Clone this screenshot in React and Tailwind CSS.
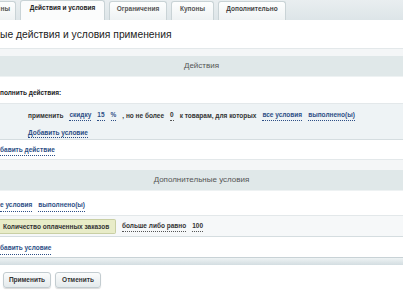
import React from "react";

const L = ({ children, dark }) => (
  <span
    className={
      "border-b border-dotted pb-[1px] whitespace-nowrap " +
      (dark ? "text-[#333] border-[#555]" : "text-[#2d4f86] border-[#2d4f86]")
    }
  >
    {children}
  </span>
);

export default function App() {
  return (
    <div
      className="w-[403px] h-[294px] overflow-hidden bg-white text-[#333]"
      style={{ fontFamily: '"Liberation Sans", Arial, sans-serif' }}
    >
      {/* tabs */}
      <div className="h-[20px] bg-gradient-to-b from-[#e9eef0] to-[#dde5e8] flex items-end gap-[4px] text-[6.5px] font-bold">
        <div className="h-[19px] w-[36px] -ml-[20px] border border-b-0 border-[#c9d3d6] rounded-t-[3px] bg-gradient-to-b from-[#fdfefe] to-[#eef2f3] text-[#555] flex items-center justify-end pr-[5px] pb-[4px]">
          ны
        </div>
        <div className="h-[20px] w-[85px] border border-b-0 border-[#c9d3d6] rounded-t-[3px] bg-[#fbfcfc] text-[#222] flex items-center justify-center pb-[5px]">
          Действия и условия
        </div>
        <div className="h-[19px] w-[58px] border border-b-0 border-[#c9d3d6] rounded-t-[3px] bg-gradient-to-b from-[#fdfefe] to-[#eef2f3] text-[#555] flex items-center justify-center pb-[4px]">
          Ограничения
        </div>
        <div className="h-[19px] w-[43px] border border-b-0 border-[#c9d3d6] rounded-t-[3px] bg-gradient-to-b from-[#fdfefe] to-[#eef2f3] text-[#555] flex items-center justify-center pb-[4px]">
          Купоны
        </div>
        <div className="h-[19px] w-[68px] border border-b-0 border-[#c9d3d6] rounded-t-[3px] bg-gradient-to-b from-[#fdfefe] to-[#eef2f3] text-[#444] flex items-center justify-center pb-[4px]">
          Дополнительно
        </div>
      </div>

      {/* title */}
      <div className="h-[28px] bg-white flex items-center pt-[2px] text-[10.3px] text-[#222]">
        ые действия и условия применения
      </div>

      <div className="h-[8px] border-t border-[#e3e8ea] bg-[#f4f6f7]" />
      <div className="h-[21px] bg-[#e0e8e9] flex items-center justify-center text-[8px] text-[#555] border-b border-[#eef2f3]">
        Действия
      </div>

      <div className="h-[27px] bg-white flex items-center pt-[6px] text-[6.5px] font-bold text-[#222] border-b border-[#e3e8ea]">
        полнить действия:
      </div>

      <div className="h-[36px] bg-[#eef3f5] flex flex-col justify-center gap-[8px] pl-[28px] pt-[4px] text-[6.5px] font-bold text-[#333] border-b border-[#d5dde0]">
        <div className="flex items-center gap-[6px] leading-[8px] whitespace-nowrap">
          <span>применить</span>
          <L>скидку</L>
          <L>15</L>
          <L>%</L>
          <span>, но не более</span>
          <L dark>0</L>
          <span>к товарам, для которых</span>
          <L>все условия</L>
          <L>выполнено(ы)</L>
        </div>
        <div className="leading-[8px]">
          <L>Добавить условие</L>
        </div>
      </div>

      <div className="h-[20px] bg-white flex items-center pt-[2px] text-[6.5px] font-bold border-b border-[#e3e8ea]">
        <L>бавить действие</L>
      </div>

      <div className="h-[10px] bg-[#f4f6f7]" />
      <div className="h-[21px] bg-[#e0e8e9] flex items-center justify-center text-[8px] text-[#555] border-b border-[#eef2f3]">
        Дополнительные условия
      </div>

      <div className="h-[25px] bg-white flex items-center gap-[6px] pt-[6px] text-[6.5px] font-bold border-b border-[#e3e8ea]">
        <L>е условия</L>
        <L>выполнено(ы)</L>
      </div>

      <div className="h-[21px] bg-[#f6f8f9] flex items-center gap-[6px] pt-[1px] text-[6.5px] font-bold border-b border-[#d5dde0]">
        <div className="h-[15px] w-[116px] shrink-0 whitespace-nowrap bg-[#e8ecc8] border border-l-0 border-[#c9cfa4] rounded-r-[2px] flex items-center pl-[3px] text-[#333]">
          Количество оплаченных заказов
        </div>
        <L dark>больше либо равно</L>
        <L dark>100</L>
      </div>

      <div className="h-[20px] bg-white flex items-center pt-[4px] text-[6.5px] font-bold">
        <L>бавить условие</L>
      </div>

      <div className="h-[8px] border-t border-[#c8d2d6] bg-gradient-to-b from-[#eef3f4] to-[#d3dde1]" />

      <div className="flex gap-[4px] pl-[3px] pt-[7px]">
        <button className="h-[16px] w-[48px] rounded-[3px] border border-[#c3ccd0] bg-gradient-to-b from-[#fbfcfc] to-[#e4eaec] text-[6.5px] font-bold text-[#333] shadow-[0_1px_1px_rgba(0,0,0,0.15)]">
          Применить
        </button>
        <button className="h-[16px] w-[46px] rounded-[3px] border border-[#c3ccd0] bg-gradient-to-b from-[#fbfcfc] to-[#e4eaec] text-[6.5px] font-bold text-[#333] shadow-[0_1px_1px_rgba(0,0,0,0.15)]">
          Отменить
        </button>
      </div>
    </div>
  );
}
